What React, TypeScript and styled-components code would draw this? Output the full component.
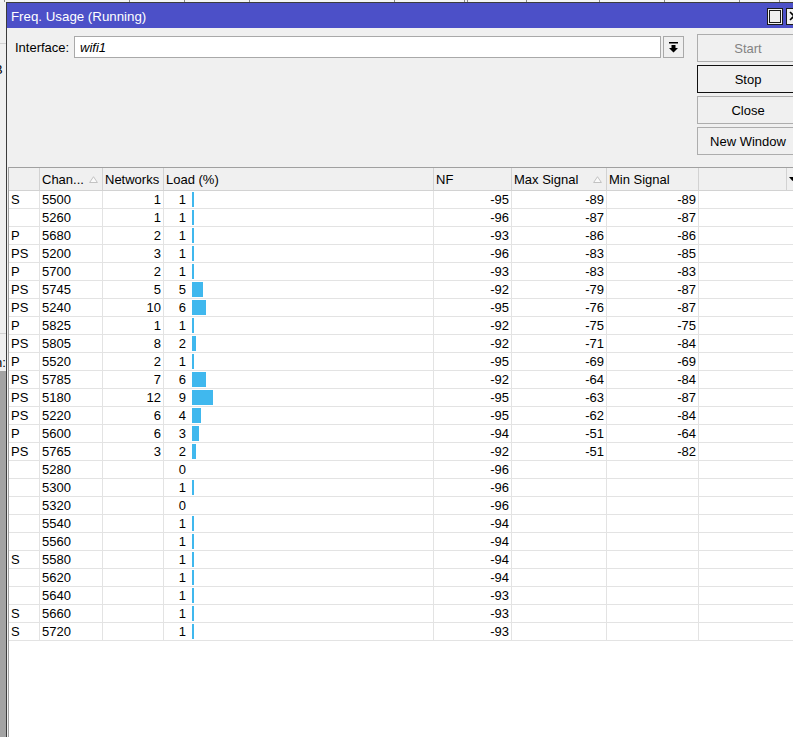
import React from "react";
import styled, { createGlobalStyle } from "styled-components";

const GlobalStyle = createGlobalStyle`
  html, body {
    margin: 0;
    padding: 0;
    background: #f0f0f0;
    overflow: hidden;
  }
  body {
    font-family: "Liberation Sans", Arial, sans-serif;
    font-size: 13px;
    color: #000;
  }
  * { box-sizing: border-box; }
`;

type Entry = {
  flag: string;
  chan: number;
  nets?: number;
  load: number;
  nf: number;
  max?: number;
  min?: number;
};

const entries: Entry[] = [
  { flag: "S", chan: 5500, nets: 1, load: 1, nf: -95, max: -89, min: -89 },
  { flag: "", chan: 5260, nets: 1, load: 1, nf: -96, max: -87, min: -87 },
  { flag: "P", chan: 5680, nets: 2, load: 1, nf: -93, max: -86, min: -86 },
  { flag: "PS", chan: 5200, nets: 3, load: 1, nf: -96, max: -83, min: -85 },
  { flag: "P", chan: 5700, nets: 2, load: 1, nf: -93, max: -83, min: -83 },
  { flag: "PS", chan: 5745, nets: 5, load: 5, nf: -92, max: -79, min: -87 },
  { flag: "PS", chan: 5240, nets: 10, load: 6, nf: -95, max: -76, min: -87 },
  { flag: "P", chan: 5825, nets: 1, load: 1, nf: -92, max: -75, min: -75 },
  { flag: "PS", chan: 5805, nets: 8, load: 2, nf: -92, max: -71, min: -84 },
  { flag: "P", chan: 5520, nets: 2, load: 1, nf: -95, max: -69, min: -69 },
  { flag: "PS", chan: 5785, nets: 7, load: 6, nf: -92, max: -64, min: -84 },
  { flag: "PS", chan: 5180, nets: 12, load: 9, nf: -95, max: -63, min: -87 },
  { flag: "PS", chan: 5220, nets: 6, load: 4, nf: -95, max: -62, min: -84 },
  { flag: "P", chan: 5600, nets: 6, load: 3, nf: -94, max: -51, min: -64 },
  { flag: "PS", chan: 5765, nets: 3, load: 2, nf: -92, max: -51, min: -82 },
  { flag: "", chan: 5280, load: 0, nf: -96 },
  { flag: "", chan: 5300, load: 1, nf: -96 },
  { flag: "", chan: 5320, load: 0, nf: -96 },
  { flag: "", chan: 5540, load: 1, nf: -94 },
  { flag: "", chan: 5560, load: 1, nf: -94 },
  { flag: "S", chan: 5580, load: 1, nf: -94 },
  { flag: "", chan: 5620, load: 1, nf: -94 },
  { flag: "", chan: 5640, load: 1, nf: -93 },
  { flag: "S", chan: 5660, load: 1, nf: -93 },
  { flag: "S", chan: 5720, load: 1, nf: -93 },
];

// column ticks of the window lying behind
const backTicks = [5, 125, 55, 65, 145, 70, 3, 59, 73, 65, 75, 40];

const ROW_COLS = "31px 63px 61px 270px 78px 95px 92px 1fr";
const HEAD_COLS = "31px 63px 61px 270px 78px 95px 92px 88px 1fr";

function App() {
  return (
    <>
      <GlobalStyle />
      <Desktop>
        <BackStrip>
          {backTicks.map((w, i) => (
            <BackTick key={i} $w={w} />
          ))}
        </BackStrip>
        <LeftStrip>
          <LeftPane>
            <LeftCell $h={42} />
            <LeftCell $h={290}>
              <LeftGlyph $top={18} $shift={-6}>B</LeftGlyph>
            </LeftCell>
            <LeftCell $h={37} $last>
              <LeftGlyph $top={21} $shift={-5}>n:</LeftGlyph>
            </LeftCell>
          </LeftPane>
          <LeftShade />
        </LeftStrip>

        <Window>
          <TitleBar>
            <TitleText>Freq. Usage (Running)</TitleText>
            <TitleButtons>
              <TitleBox>
                <MaxGlyph />
              </TitleBox>
              <TitleBox>
                <svg width="10" height="10" viewBox="0 0 10 10">
                  <path d="M1 1 L9 9 M9 1 L1 9" stroke="#000" strokeWidth="1.6" />
                </svg>
              </TitleBox>
            </TitleButtons>
          </TitleBar>

          <Body>
            <TopArea>
              <InterfaceRow>
                <FieldLabel>Interface:</FieldLabel>
                <Field>wifi1</Field>
                <DropButton>
                  <svg width="9" height="11" viewBox="0 0 9 11">
                    <rect x="0" y="0" width="9" height="1.5" fill="#000" />
                    <path d="M2.5 3 H6.5 V6 H9 L4.5 10.5 L0 6 H2.5 Z" fill="#000" />
                  </svg>
                </DropButton>
              </InterfaceRow>
              <ButtonColumn>
                <ActionButton $state="disabled">Start</ActionButton>
                <ActionButton $state="focused">Stop</ActionButton>
                <ActionButton>Close</ActionButton>
                <ActionButton>New Window</ActionButton>
              </ButtonColumn>
            </TopArea>

            <Table>
              <HeaderRow>
                <HeadCell />
                <HeadCell>
                  Chan...
                  <SortMark />
                </HeadCell>
                <HeadCell>Networks</HeadCell>
                <HeadCell>Load (%)</HeadCell>
                <HeadCell>NF</HeadCell>
                <HeadCell>
                  Max Signal
                  <SortMark />
                </HeadCell>
                <HeadCell>Min Signal</HeadCell>
                <HeadCell />
                <HeadCell $plain>
                  <svg width="7" height="4" viewBox="0 0 7 4">
                    <path d="M0 0 H7 L3.5 4 Z" fill="#000" />
                  </svg>
                </HeadCell>
              </HeaderRow>
              {entries.map((e) => (
                <DataRow key={e.chan}>
                  <Cell>{e.flag}</Cell>
                  <Cell>{e.chan}</Cell>
                  <Cell $right>{e.nets ?? ""}</Cell>
                  <Cell>
                    <LoadNum>{e.load}</LoadNum>
                    {e.load > 0 && (
                      <LoadBar style={{ width: Math.floor((e.load * 7) / 3) }} />
                    )}
                  </Cell>
                  <Cell $right>{e.nf}</Cell>
                  <Cell $right>{e.max ?? ""}</Cell>
                  <Cell $right>{e.min ?? ""}</Cell>
                  <Cell $plain />
                </DataRow>
              ))}
            </Table>
          </Body>
        </Window>
      </Desktop>
    </>
  );
}

function SortMark() {
  return (
    <SortIcon width="9" height="7" viewBox="0 0 9 7">
      <path d="M4.5 0.7 L8.4 6.5 H0.6 Z" fill="#fafafa" stroke="#c2c2c2" strokeWidth="1" />
    </SortIcon>
  );
}

export default App;

const Desktop = styled.div`
  width: 793px;
  height: 737px;
  overflow: hidden;
  display: grid;
  grid-template-columns: 6px 799px;
  grid-template-rows: 2px 1fr;
  background: #f0f0f0;
`;

const BackStrip = styled.div`
  grid-column: 1 / span 2;
  display: flex;
  background: #f4f4f4;
`;

const BackTick = styled.div<{ $w: number }>`
  width: ${(p) => p.$w}px;
  flex-shrink: 0;
  border-right: 1px solid #8a8a8a;
`;

const LeftStrip = styled.div`
  display: flex;
  flex-direction: column;
  overflow: hidden;
`;

const LeftPane = styled.div`
  display: flex;
  flex-direction: column;
  background: #f0f0f0;
`;

const LeftCell = styled.div<{ $h: number; $last?: boolean }>`
  height: ${(p) => p.$h}px;
  border-bottom: ${(p) => (p.$last ? "none" : "1px solid #d2d2d2")};
  overflow: hidden;
`;

const LeftGlyph = styled.div<{ $top: number; $shift: number }>`
  margin-top: ${(p) => p.$top}px;
  margin-left: ${(p) => p.$shift}px;
  line-height: 16px;
  white-space: nowrap;
  color: #000;
`;

const LeftShade = styled.div`
  flex: 1;
  background: #a3a3a3;
`;

const Window = styled.div`
  display: flex;
  flex-direction: column;
  border-left: 1px solid #3c3c3c;
  border-top: 1px solid #3c3c3c;
  min-height: 0;
`;

const TitleBar = styled.div`
  height: 25px;
  flex-shrink: 0;
  display: flex;
  align-items: center;
  padding: 0 3px 0 4px;
  background: #4c50c8;
  color: #fff;
`;

const TitleText = styled.span`
  font-size: 13.3px;
  padding-top: 1px;
`;

const TitleButtons = styled.div`
  margin-left: auto;
  display: flex;
  gap: 3px;
  padding-top: 1px;
`;

const TitleBox = styled.div`
  width: 16px;
  height: 17px;
  border: 1px solid #1a1a1a;
  background: #f0f0f0;
  display: flex;
  align-items: center;
  justify-content: center;
`;

const MaxGlyph = styled.div`
  width: 12px;
  height: 13px;
  border: 1px solid #1a1a1a;
`;

const Body = styled.div`
  flex: 1;
  display: flex;
  flex-direction: column;
  min-height: 0;
`;

const TopArea = styled.div`
  height: 139px;
  flex-shrink: 0;
  display: grid;
  grid-template-columns: 1fr 102px;
  column-gap: 13px;
  align-items: start;
  padding: 6px 6px 0 8px;
`;

const InterfaceRow = styled.div`
  display: flex;
  align-items: center;
  height: 22px;
  margin-top: 2px;
`;

const FieldLabel = styled.span`
  width: 59px;
  flex-shrink: 0;
`;

const Field = styled.div`
  flex: 1;
  height: 22px;
  display: flex;
  align-items: center;
  padding-left: 5px;
  background: #fff;
  border: 1px solid #a9a9a9;
  font-style: italic;
`;

const DropButton = styled.div`
  width: 21px;
  height: 22px;
  margin-left: 2px;
  display: flex;
  align-items: center;
  justify-content: center;
  border: 1px solid #a9a9a9;
  background: #f0f0f0;
`;

const ButtonColumn = styled.div`
  display: flex;
  flex-direction: column;
  gap: 3px;
`;

const ActionButton = styled.div<{ $state?: "disabled" | "focused" }>`
  height: 28px;
  display: flex;
  align-items: center;
  justify-content: center;
  background: #f0f0f0;
  border: 1px solid ${(p) => (p.$state === "focused" ? "#111" : "#adadad")};
  color: ${(p) => (p.$state === "disabled" ? "#838383" : "#000")};
  white-space: nowrap;
`;

const Table = styled.div`
  flex: 1;
  margin-left: 1px;
  border-left: 1px solid #a0a0a0;
  border-top: 1px solid #a0a0a0;
  background: #fff;
  display: flex;
  flex-direction: column;
`;

const HeaderRow = styled.div`
  display: grid;
  grid-template-columns: ${HEAD_COLS};
  height: 23px;
  background: #f0f0f0;
  border-bottom: 1px solid #d2d2d2;
`;

const HeadCell = styled.div<{ $plain?: boolean }>`
  display: flex;
  align-items: center;
  padding: 0 3px 0 2px;
  border-right: ${(p) => (p.$plain ? "none" : "1px solid #d2d2d2")};
  white-space: nowrap;
  overflow: hidden;
`;

const SortIcon = styled.svg`
  margin-left: auto;
  margin-right: 1px;
  flex-shrink: 0;
`;

const DataRow = styled.div`
  display: grid;
  grid-template-columns: ${ROW_COLS};
  height: 18px;
  border-bottom: 1px solid #e3e3e3;
`;

const Cell = styled.div<{ $right?: boolean; $plain?: boolean }>`
  display: flex;
  align-items: center;
  justify-content: ${(p) => (p.$right ? "flex-end" : "flex-start")};
  padding: 0 2px;
  border-right: ${(p) => (p.$plain ? "none" : "1px solid #e3e3e3")};
  white-space: nowrap;
  overflow: hidden;
`;

const LoadNum = styled.span`
  width: 20px;
  text-align: right;
  flex-shrink: 0;
`;

const LoadBar = styled.div`
  height: 15px;
  margin-left: 6px;
  background: #40b8ee;
  flex-shrink: 0;
`;
